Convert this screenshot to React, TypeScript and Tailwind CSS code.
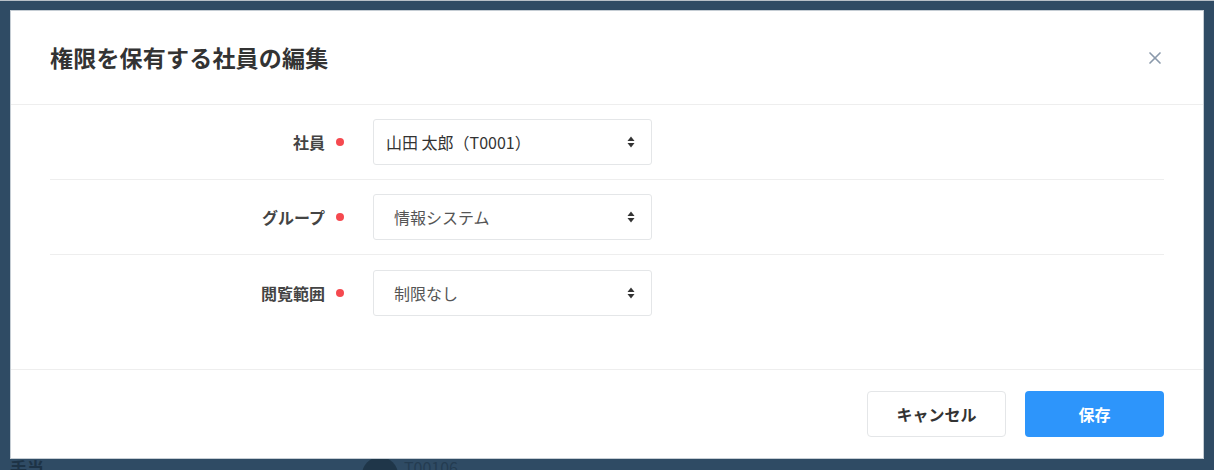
import { X } from "lucide-react";

interface propsRow {
    label: string
    value: string
    inset?: boolean
    last?: boolean
}

function SelectArrow() {
    return (
        <svg width="8" height="12" viewBox="0 0 8 12" className="shrink-0">
            <path d="M4 0.5 L7.5 5 L0.5 5 Z" fill="#333" />
            <path d="M4 11.5 L7.5 7 L0.5 7 Z" fill="#333" />
        </svg>
    )
}

function FormRow(props: propsRow) {
    return (
        <div className={`flex items-center h-[75px] ${props.last ? "" : "border-b border-[#eeeeee]"}`}>
            <div className="w-[275px] text-right text-[16px] font-bold text-[#444]">{props.label}</div>
            <span className="ml-[11px] w-2 h-2 rounded-full bg-[#f5494f]"></span>
            <div className={`ml-[29px] w-[279px] h-[46px] flex items-center justify-between pr-[16px] border border-[#e4e6e8] rounded-[3px] bg-white text-[16px] ${props.inset ? "pl-5 text-[#555]" : "pl-3 text-[#333]"}`}>
                <span>{props.value}</span>
                <SelectArrow />
            </div>
        </div>
    )
}

export default function App() {
    return (
        <div
            className="relative w-[1214px] h-[470px] bg-[#2f4b64] overflow-hidden border-t border-[#b8c0c8]"
            style={{ fontFamily: '"Noto Sans CJK JP", "Noto Sans", sans-serif' }}
        >
            {/* page behind the modal */}
            <div className="absolute left-[10px] top-[452px] flex items-start text-[#1d3346] text-[17px] font-bold leading-none">
                <span className="mt-[6px]">手当</span>
                <span className="ml-[318px] w-[36px] h-[36px] rounded-full bg-[#1f3649] mt-[4px]"></span>
                <span className="ml-[6px] mt-[6px] font-normal text-[#243c51] text-[16px]">T00106</span>
            </div>

            <div className="absolute left-[11px] top-[10px] w-[1192px] h-[447px] bg-white flex flex-col ring-1 ring-[#c5cdd4]">
                <div className="flex items-center justify-between h-[94px] px-[39px] border-b border-[#eeeeee]">
                    <h1 className="text-[23px] font-bold text-[#333] tracking-[0.2px]">権限を保有する社員の編集</h1>
                    <X size={20} strokeWidth={2} className="text-[#8a99ab] mr-[-1px]" />
                </div>

                <div className="flex-1 px-[39px] border-b border-[#eeeeee]">
                    <FormRow label="社員" value="山田 太郎（T0001）" />
                    <FormRow label="グループ" value="情報システム" inset />
                    <FormRow label="閲覧範囲" value="制限なし" inset last />
                </div>

                <div className="flex justify-end items-center gap-[19px] h-[88px] px-[39px]">
                    <button className="w-[139px] h-[46px] rounded-[4px] border border-[#e4e6e8] bg-white text-[16px] font-bold text-[#333]">
                        キャンセル
                    </button>
                    <button className="w-[139px] h-[46px] rounded-[4px] bg-[#2d95fb] text-[16px] font-bold text-white">
                        保存
                    </button>
                </div>
            </div>
        </div>
    )
}
